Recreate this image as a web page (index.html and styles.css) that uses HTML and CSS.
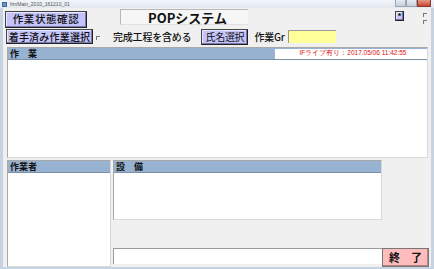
FILE: index.html
```html
<!DOCTYPE html>
<html lang="ja">
<head>
<meta charset="utf-8">
<title>frmMain</title>
<link rel="stylesheet" href="styles.css">
</head>
<body>
<div class="window">
  <div class="titlebar">
    <span class="app-icon"></span>
    <span class="title-text">frmMain_2010_161210_01</span>
    <div class="controls">
      <span class="ctl"></span><span class="ctl"></span><span class="ctl close"></span>
    </div>
  </div>
  <div class="client">
    <div class="row1">
      <button class="btn btn-status">作業状態確認</button>
      <div class="title-box">POPシステム</div>
      <button class="btn btn-star">*</button>
      <div class="mini-checks"><span class="mini-cb"></span><span class="mini-cb"></span></div>
    </div>
    <div class="row2">
      <button class="btn btn-started">着手済み作業選択</button>
      <span class="cb"></span>
      <span class="label-done">完成工程を含める</span>
      <button class="btn btn-name">氏名選択</button>
      <span class="label-gr">作業Gr</span>
      <span class="input-gr"></span>
    </div>
    <div class="panel panel-work">
      <div class="phead">
        <span class="phead-title">作　業</span>
        <span class="status">IFライブ有り：2017.05/06 11:42:55</span>
      </div>
      <div class="pbody"></div>
    </div>
    <div class="bottom">
      <div class="panel panel-worker">
        <div class="phead"><span class="phead-title">作業者</span></div>
        <div class="pbody"></div>
      </div>
      <div class="mid">
        <div class="panel panel-equip">
          <div class="phead"><span class="phead-title">設　備</span></div>
          <div class="pbody"></div>
        </div>
        <div class="msg-row">
          <div class="msg-box"></div>
          <button class="btn btn-exit">終　了</button>
        </div>
      </div>
    </div>
  </div>
</div>
</body>
</html>
```

FILE: styles.css
```css
* { box-sizing: border-box; }
html, body { margin: 0; padding: 0; }
body {
  width: 434px; height: 269px; overflow: hidden;
  font-family: "Noto Sans CJK JP", "Noto Sans", sans-serif;
  background: #fff;
}
.window {
  width: 434px; height: 269px;
  background: #c6d3e1;
  display: flex; flex-direction: column;
  padding: 0 3px 3px 3px;
}
.titlebar {
  height: 9px; display: flex; align-items: center;
  background: linear-gradient(#f2f5f9, #e2e8ef);
  margin: 0 -3px; padding-left: 2px;
}
.app-icon {
  width: 5px; height: 5px; background: #6a8fc0; border: 1px solid #3d6aa8;
  margin-right: 3px;
}
.title-text { font-family: "Liberation Sans", sans-serif; font-size: 5px; color: #555; }
.controls { margin-left: auto; display: flex; height: 8px; align-self: flex-start; margin-right: 3px; }
.ctl { width: 11px; height: 7px; background: linear-gradient(#e6ebf1, #c6cfd9); border: 1px solid #9aa6b4; border-top: none; }
.close { width: 14px; background: linear-gradient(#e69a8c, #c8412c); border-color: #8a3a2e; }

.client {
  flex: 1; background: #f0f0f0;
  display: flex; flex-direction: column;
  padding: 3px 1px 0 2px;
}
.btn {
  font-family: "Noto Sans CJK JP", sans-serif;
  background: #c4c4fa; color: #111;
  border: 1px solid #444; border-right-color: #222; border-bottom-color: #222;
  box-shadow: inset -1px -1px 0 #7a7ab0, inset 1px 1px 0 #e6e6ff;
  padding: 0; margin: 0; line-height: 1;
  display: flex; align-items: center; justify-content: center;
}
.row1 { display: flex; height: 17px; align-items: flex-start; }
.btn-status { width: 82px; height: 17px; font-size: 10.5px; letter-spacing: 0.6px; font-weight: 500; }
.title-box {
  margin-left: 33px; width: 128px; height: 16px; margin-top: -2px;
  border-top: 1px solid #b8b8b8; border-left: 1px solid #b8b8b8; border-bottom: 1px solid #e0e0e0;
  background: #f6f6f6;
  font-family: "Noto Sans CJK JP", sans-serif; font-weight: 700; font-size: 13px;
  line-height: 15px; padding-left: 27px; color: #111;
}
.btn-star { margin-left: 147px; width: 9px; height: 10px; font-size: 8px; font-weight: 700; }
.mini-checks { margin-left: 19px; display: flex; flex-direction: column; gap: 3px; margin-top: 2px; }
.mini-cb { width: 4px; height: 4px; border-left: 1px solid #777; border-top: 1px solid #777; }

.row2 { display: flex; align-items: center; height: 15px; margin-top: 1px; }
.btn-started { width: 87px; height: 15px; font-size: 10px; letter-spacing: 0.2px; font-weight: 500; margin-left: 1px; }
.cb { width: 4px; height: 4px; border-left: 1px solid #777; border-top: 1px solid #777; margin-left: 3px; margin-top: 2px; }
.label-done { margin-left: 13px; font-size: 10px; color: #111; letter-spacing: -0.2px; font-weight: 500; }
.btn-name { margin-left: 10px; width: 47px; height: 16px; font-size: 10px; letter-spacing: -0.3px; }
.label-gr { margin-left: 6px; font-size: 10px; color: #111; letter-spacing: -0.2px; font-weight: 500; }
.input-gr { margin-left: 3px; width: 48px; height: 13px; background: #ffff99; border-top: 1px solid #9a9a9a; border-left: 1px solid #9a9a9a; }

.panel { display: flex; flex-direction: column; border: 1px solid #a8a8a8; border-right-color: #d8d8d8; border-bottom-color: #d8d8d8; background: #fff; }
.phead {
  height: 12px; background: #98b2d2; border-bottom: 1px solid #7d8fa8;
  display: flex; align-items: center; padding-left: 2px;
}
.phead-title { font-size: 9px; font-weight: 700; color: #111; line-height: 1; }
.pbody { flex: 1; background: #fff; }

.panel-work { margin: 3px 0 0 2px; width: 421px; height: 111px; }
.status {
  margin-left: auto; width: 152px; height: 10px; background: #fff;
  color: #e01010; font-family: "Liberation Sans", sans-serif; font-size: 6.5px;
  display: flex; align-items: center; justify-content: center; padding-left: 4px;
}

.bottom { display: flex; margin: 2px 0 0 2px; height: 107px; gap: 2px; }
.panel-worker { width: 104px; height: 107px; }
.mid { display: flex; flex-direction: column; width: 316px; }
.panel-equip { width: 269px; height: 60px; }
.msg-row { display: flex; margin-top: auto; align-items: flex-end; }
.msg-box { width: 269px; height: 16px; background: #fff; border-top: 1px solid #9a9a9a; border-left: 1px solid #9a9a9a; margin-bottom: 3px; }
.btn-exit {
  width: 47px; height: 19px; background: #ffbcbc; font-size: 11px; font-weight: 700;
  border: 1px solid #777; box-shadow: inset -1px -1px 0 #c08080;
}
```
